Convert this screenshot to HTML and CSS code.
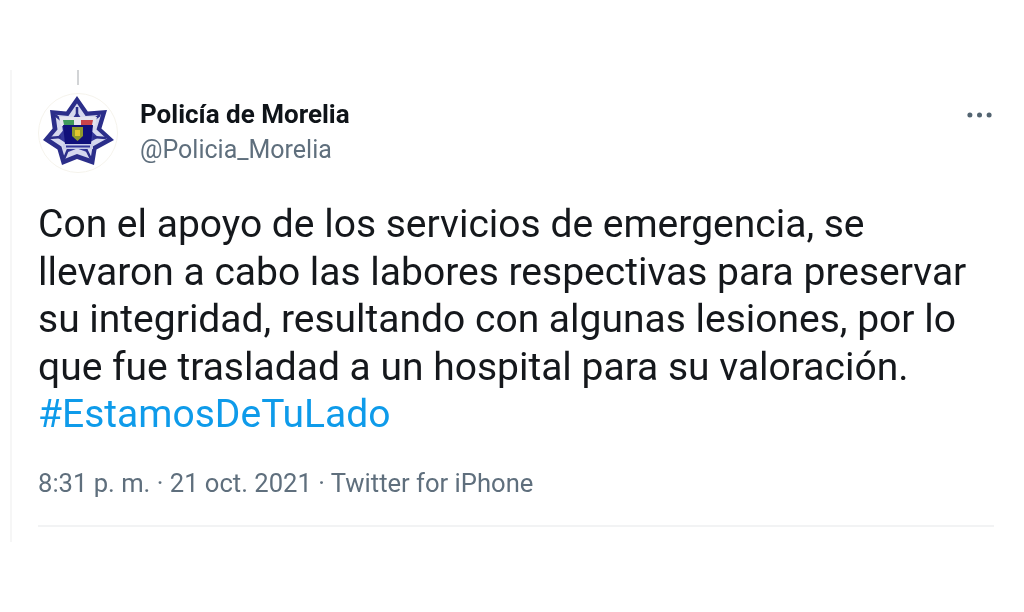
FILE: index.html
```html
<!DOCTYPE html>
<html lang="es">
<head>
<meta charset="utf-8">
<title>Policía de Morelia</title>
<link rel="stylesheet" href="styles.css">
</head>
<body>
<main class="card">
  <div class="thread-tick"></div>
  <header class="head">
    <svg class="avatar" viewBox="0 0 80 80" aria-label="Policía de Morelia">
      <defs>
        <polygon id="star" points="39,3 49.8,18.5 69,17 63.4,35.4 76,47 58.5,56.6 56,72 39,66 24,72 19.5,56.6 5,47 14.6,35.4 12,17 28.2,18.5"/>
      </defs>
      <circle cx="40" cy="40" r="39.5" fill="#fff" stroke="#f5f3ec"/>
      <use href="#star" fill="#2b2e8a"/>
      <use href="#star" fill="#d5d8ee" transform="translate(39 41) scale(.8) translate(-39 -41)"/>
      <use href="#star" fill="#34379b" transform="translate(39 41) scale(.58) translate(-39 -41)"/>
      <path d="M39 14 V26 M62 22 L50 31 M68 45 L55 44 M53 66 L47 54 M26 66 L31 54 M11 45 L23 44 M17 22 L28 31" stroke="#2b2e8a" stroke-width="2.5"/>
      <path d="M21 24 H59 L57 33 H23 Z" fill="#e4e4ee"/>
      <path d="M25 27 H36 V32 H26 Z" fill="#3f9a5c"/>
      <path d="M43 27 H55 L54 32 H43 Z" fill="#c8434a"/>
      <path d="M25 32 H55 L53 51 H27 Z" fill="#10107a"/>
      <path d="M34 34 H45 V43 L39.5 48 L34 43 Z" fill="#8f9a2c"/>
      <path d="M37 37 H42 V43 H37 Z" fill="#e3c62e"/>
      <rect x="25" y="51" width="30" height="5" fill="#c9cde8"/>
      <rect x="28" y="52.5" width="24" height="2" fill="#34379b"/>
    </svg>
    <div class="names">
      <div class="name">Policía de Morelia</div>
      <div class="handle">@Policia_Morelia</div>
    </div>
    <svg class="more" viewBox="0 0 26 6" aria-label="Más">
      <circle cx="3" cy="3" r="2.6"/>
      <circle cx="13" cy="3" r="2.6"/>
      <circle cx="23" cy="3" r="2.6"/>
    </svg>
  </header>
  <p class="text">Con el apoyo de los servicios de emergencia, se<br>llevaron a cabo las labores respectivas para preservar<br>su integridad, resultando con algunas lesiones, por lo<br>que fue trasladad a un hospital para su valoración.<br><span class="tag">#EstamosDeTuLado</span></p>
  <div class="meta">8:31 p. m. · 21 oct. 2021 · Twitter for iPhone</div>
  <div class="rule"></div>
</main>
</body>
</html>
```
FILE: styles.css
```css
html, body {
  margin: 0;
  background: #fff;
}
body {
  width: 1024px;
  height: 612px;
  overflow: hidden;
  font-family: Roboto, "Liberation Sans", sans-serif;
}
.card {
  box-sizing: border-box;
  margin: 70px 0 0 10px;
  width: 984px;
  height: 472px;
  border-left: 2px solid #f6f6f6;
  padding-left: 26px;
  display: flex;
  flex-direction: column;
  filter: blur(.4px);
}
.thread-tick {
  width: 2px;
  height: 15px;
  margin-left: 39px;
  background: #d2d4d6;
}
.head {
  display: flex;
  align-items: flex-start;
  margin-top: 8px;
}
.avatar {
  width: 80px;
  height: 80px;
  flex: none;
  filter: blur(.4px);
}
.names {
  margin-left: 22px;
  flex: 1;
  padding-top: 6px;
}
.name {
  font-size: 26px;
  line-height: 30px;
  font-weight: 700;
  color: #0f1419;
}
.handle {
  font-size: 25px;
  line-height: 30px;
  margin-top: 6px;
  color: #5f6f7d;
}
.more {
  width: 25px;
  height: 6px;
  margin: 19px 2px 0 0;
  fill: #536471;
}
.text {
  margin: 28px 0 0;
  font-size: 39px;
  line-height: 47.5px;
  color: #15181c;
}
.tag {
  color: #0e9bea;
}
.meta {
  margin-top: 27px;
  font-size: 25.6px;
  line-height: 34px;
  color: #5f6f7d;
}
.rule {
  margin-top: 25px;
  height: 2px;
  background: #f2f3f4;
}
```
